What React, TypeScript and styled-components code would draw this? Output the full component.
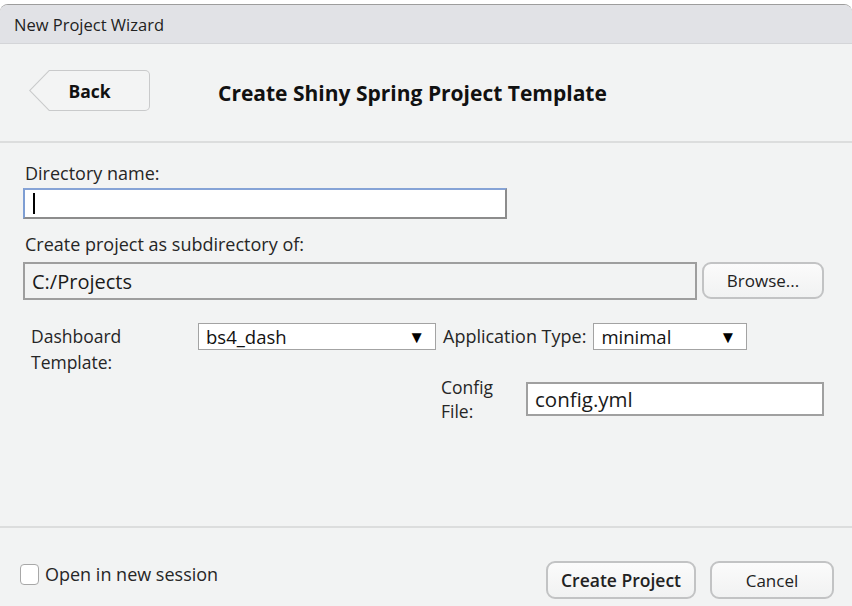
import React from "react";
import styled, { createGlobalStyle } from "styled-components";

const Global = createGlobalStyle`
  html, body { margin: 0; padding: 0; background: #ffffff; }
  body { font-family: "Open Sans", "Noto Sans", sans-serif; color: #1e1e1e; }
  * { box-sizing: border-box; }
`;

const Window = styled.div`
  margin-top: 4px;
  height: 602px;
  border-top: 1.5px solid #9d9d9d;
  border-radius: 8px 8px 0 0;
  background: #f2f3f3;
  display: flex;
  flex-direction: column;
  overflow: hidden;
`;

const TitleBar = styled.div`
  height: 39px;
  flex-shrink: 0;
  background: #e1e2e6;
  border-bottom: 1.5px solid #d4d5d8;
  display: flex;
  align-items: center;
  padding-left: 14px;
  font-size: 16.5px;
  color: #222;
`;

const Header = styled.div`
  height: 99px;
  flex-shrink: 0;
  display: flex;
  align-items: center;
  padding-left: 29px;
  gap: 68px;
  border-bottom: 2px solid #dcdddd;
`;

const BackOuter = styled.div`
  width: 121px;
  height: 41px;
  margin-top: -4px;
  background: #c9cacb;
  clip-path: polygon(20px 0, 100% 0, 100% 100%, 20px 100%, 0 50%);
  border-radius: 0 5px 5px 0;
  padding: 1px;
`;

const BackInner = styled.button`
  width: 100%;
  height: 100%;
  border: none;
  border-radius: 0 4px 4px 0;
  background: #f3f4f4;
  clip-path: polygon(19.5px 0, 100% 0, 100% 100%, 19.5px 100%, 0.5px 50%);
  font-family: inherit;
  font-weight: 700;
  font-size: 17.5px;
  color: #111;
  padding: 0;
  text-align: center;
`;

const Heading = styled.h1`
  margin: 0;
  font-size: 21px;
  font-weight: 700;
  color: #111;
`;

const Form = styled.div`
  flex: 1;
  padding: 18px 28px 0 23px;
  display: flex;
  flex-direction: column;
  border-bottom: 2px solid #dcdddd;
`;

const Label = styled.label`
  display: block;
  font-size: 18px;
  line-height: 24px;
  color: #262626;
  padding-left: 2px;
`;

const DirInput = styled.div`
  margin-top: 3px;
  width: 484px;
  height: 31px;
  background: #fff;
  border: 2px solid #7e9ed3;
  border-bottom-color: #8c8c8c;
  border-right-color: #8c8c8c;
  border-top-color: #86a3d6;
  display: flex;
  align-items: center;
  padding-left: 8px;
`;

const Caret = styled.span`
  display: block;
  width: 2px;
  height: 21px;
  background: #000;
`;

const SubLabel = styled(Label)`
  margin-top: 13px;
`;

const PathRow = styled.div`
  margin-top: 6px;
  display: flex;
  gap: 5px;
  align-items: flex-start;
`;

const ReadInput = styled.div`
  width: 674px;
  height: 38px;
  border: 2px solid #9e9e9e;
  background: #f2f3f3;
  font-size: 20px;
  padding-left: 7px;
  display: flex;
  align-items: center;
  color: #1a1a1a;
`;

const Button = styled.button<{ $w: number; $h?: number; $strong?: boolean }>`
  width: ${(p) => p.$w}px;
  height: ${(p) => p.$h ?? 38}px;
  border: 2px solid #c2c3c4;
  border-radius: 9px;
  background: linear-gradient(#fbfbfb, #f1f2f2);
  font-family: inherit;
  font-size: ${(p) => (p.$strong ? 17.5 : 17)}px;
  font-weight: ${(p) => (p.$strong ? 600 : 400)};
  color: #222;
  padding: 0;
`;

const OptionsRow = styled.div`
  margin-top: 23px;
  display: flex;
  align-items: flex-start;
`;

const SideLabel = styled.div<{ $w: number; $lh: number; $pl?: number }>`
  width: ${(p) => p.$w}px;
  padding-left: ${(p) => p.$pl ?? 0}px;
  font-size: 17.5px;
  line-height: ${(p) => p.$lh}px;
  color: #262626;
  flex-shrink: 0;
`;

const Select = styled.div<{ $w: number }>`
  width: ${(p) => p.$w}px;
  height: 27px;
  background: #fff;
  border: 1px solid #a3a3a3;
  display: flex;
  align-items: center;
  justify-content: space-between;
  padding: 0 10px 0 7px;
  font-size: 18.5px;
  color: #111;
  flex-shrink: 0;
`;

const Arrow = styled.span`
  font-size: 17px;
  line-height: 1;
  color: #000;
`;

const InlineLabel = styled.div`
  font-size: 18px;
  line-height: 27px;
  margin: 0 7px 0 7px;
  color: #262626;
  white-space: nowrap;
`;

const ConfigRow = styled.div`
  padding-left: 418px;
  display: flex;
  align-items: flex-start;
`;

const ConfigInput = styled.div`
  margin-top: 7px;
  width: 298px;
  height: 34px;
  background: #fff;
  border: 2px solid #a0a0a0;
  font-size: 20.5px;
  padding-left: 7px;
  display: flex;
  align-items: center;
  color: #1a1a1a;
`;

const Footer = styled.div`
  height: 78px;
  flex-shrink: 0;
  display: flex;
  align-items: flex-start;
  padding: 33px 18px 0 20px;
`;

const CheckWrap = styled.label`
  display: flex;
  align-items: center;
  gap: 6px;
  font-size: 18px;
  line-height: 24px;
  color: #262626;
  margin-top: 1px;
`;

const Box = styled.span`
  width: 19px;
  height: 21px;
  border: 1.5px solid #a8a8a8;
  border-radius: 4px;
  background: #fff;
`;

const Spacer = styled.div`
  flex: 1;
`;

const Buttons = styled.div`
  display: flex;
  gap: 14px;
`;

export default function App() {
  return (
    <>
      <Global />
      <Window>
        <TitleBar>New Project Wizard</TitleBar>
        <Header>
          <BackOuter>
            <BackInner>Back</BackInner>
          </BackOuter>
          <Heading>Create Shiny Spring Project Template</Heading>
        </Header>
        <Form>
          <Label>Directory name:</Label>
          <DirInput>
            <Caret />
          </DirInput>
          <SubLabel>Create project as subdirectory of:</SubLabel>
          <PathRow>
            <ReadInput>C:/Projects</ReadInput>
            <Button $w={122} $h={37}>Browse...</Button>
          </PathRow>
          <OptionsRow>
            <SideLabel $w={175} $lh={26} $pl={8}>
              Dashboard
              <br />
              Template:
            </SideLabel>
            <Select $w={238}>
              bs4_dash<Arrow>▼</Arrow>
            </Select>
            <InlineLabel>Application Type:</InlineLabel>
            <Select $w={154}>
              minimal<Arrow>▼</Arrow>
            </Select>
          </OptionsRow>
          <ConfigRow>
            <SideLabel $w={85} $lh={24}>
              Config
              <br />
              File:
            </SideLabel>
            <ConfigInput>config.yml</ConfigInput>
          </ConfigRow>
        </Form>
        <Footer>
          <CheckWrap>
            <Box />
            Open in new session
          </CheckWrap>
          <Spacer />
          <Buttons>
            <Button $w={150} $strong>Create Project</Button>
            <Button $w={124}>Cancel</Button>
          </Buttons>
        </Footer>
      </Window>
    </>
  );
}
